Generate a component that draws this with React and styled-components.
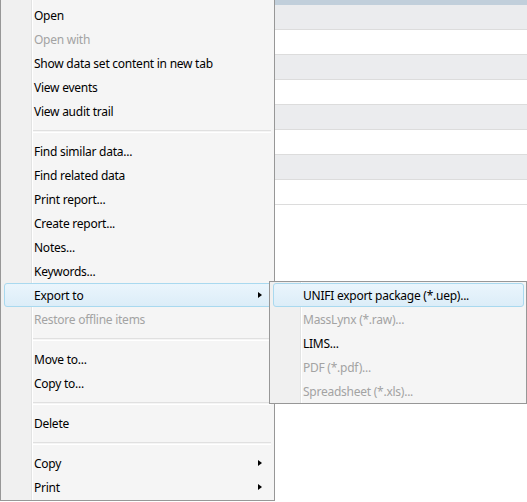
import React from "react";
import styled, { createGlobalStyle } from "styled-components";

const Global = createGlobalStyle`
  html, body { margin: 0; padding: 0; background: #fff; }
  body { width: 527px; height: 502px; overflow: hidden; position: relative; }
  #root { position: relative; width: 527px; height: 502px; }
`;

const Grid = styled.div`
  display: flex;
  flex-direction: column;
  width: 100%;
`;

const HeaderBar = styled.div`
  height: 5px;
  background: #c1cfdb;
`;

const Row = styled.div`
  height: 24px;
  background: ${(p) => (p.$alt ? "#ebecee" : "#ffffff")};
  border-bottom: 1px solid #dcdcdc;
`;

const Menu = styled.div`
  position: absolute;
  left: ${(p) => p.$left}px;
  top: ${(p) => p.$top}px;
  width: ${(p) => p.$width}px;
  box-sizing: border-box;
  display: flex;
  flex-direction: column;
  border: 1px solid #979797;
  background: linear-gradient(
    to right,
    #f0f0f0 0,
    #f0f0f0 ${(p) => p.$gutter}px,
    #e2e3e3 ${(p) => p.$gutter}px,
    #e2e3e3 ${(p) => p.$gutter + 1}px,
    #ffffff ${(p) => p.$gutter + 1}px,
    #ffffff ${(p) => p.$gutter + 2}px,
    #f5f5f5 ${(p) => p.$gutter + 2}px
  );
  padding: ${(p) => p.$padTop}px 0 ${(p) => p.$padBottom}px 0;
  font-family: "Noto Sans", "Open Sans", sans-serif;
  font-size: 12px;
  z-index: ${(p) => p.$z};
`;

const Item = styled.div`
  position: relative;
  height: 24px;
  box-sizing: border-box;
  margin: 0 2px 0 3px;
  padding-left: ${(p) => p.$indent}px;
  display: flex;
  align-items: center;
  color: ${(p) => (p.$disabled ? "#a3a3a3" : "#000000")};
  border: 1px solid ${(p) => (p.$active ? "#a9d9ef" : "transparent")};
  border-radius: 3px;
  background: ${(p) =>
    p.$active ? "linear-gradient(to bottom, #eaf5fc 0%, #dcedf8 100%)" : "transparent"};
  white-space: nowrap;
  letter-spacing: -0.25px;
`;

const Label = styled.span`
  flex: 1;
`;

const Arrow = styled.span`
  width: 0;
  height: 0;
  margin-right: 9px;
  border-top: 3.5px solid transparent;
  border-bottom: 3.5px solid transparent;
  border-left: 4px solid #000;
`;

const Separator = styled.div`
  height: 16px;
  display: flex;
  align-items: center;
  padding-left: ${(p) => p.$indent}px;
  padding-right: 3px;
  &::after {
    content: "";
    flex: 1;
    height: 1px;
    border-top: 1px solid #e0e0e0;
    border-bottom: 1px solid #ffffff;
  }
`;

const mainItems = [
  { t: "Open" },
  { t: "Open with", d: true },
  { t: "Show data set content in new tab" },
  { t: "View events" },
  { t: "View audit trail" },
  { sep: true },
  { t: "Find similar data..." },
  { t: "Find related data" },
  { t: "Print report..." },
  { t: "Create report..." },
  { t: "Notes..." },
  { t: "Keywords..." },
  { t: "Export to", sub: true, a: true },
  { t: "Restore offline items", d: true },
  { sep: true },
  { t: "Move to..." },
  { t: "Copy to..." },
  { sep: true },
  { t: "Delete" },
  { sep: true },
  { t: "Copy", sub: true },
  { t: "Print", sub: true },
];

const subItems = [
  { t: "UNIFI export package (*.uep)...", a: true },
  { t: "MassLynx (*.raw)...", d: true },
  { t: "LIMS..." },
  { t: "PDF (*.pdf)...", d: true },
  { t: "Spreadsheet (*.xls)...", d: true },
];

function MenuList({ items, indent, sepIndent }) {
  return items.map((it, i) =>
    it.sep ? (
      <Separator key={i} $indent={sepIndent} />
    ) : (
      <Item key={i} $indent={indent} $disabled={it.d} $active={it.a}>
        <Label>{it.t}</Label>
        {it.sub && <Arrow />}
      </Item>
    )
  );
}

export default function App() {
  const rows = [true, false, true, false, true, false, true, false];
  return (
    <>
      <Global />
      <Grid>
        <HeaderBar />
        {rows.map((alt, i) => (
          <Row key={i} $alt={alt} />
        ))}
      </Grid>
      <Menu $left={0} $top={-1} $width={275} $gutter={30} $padTop={3} $padBottom={1} $z={1}>
        <MenuList items={mainItems} indent={29} sepIndent={32} />
      </Menu>
      <Menu $left={269} $top={281} $width={258} $gutter={30} $padTop={1} $padBottom={0} $z={2}>
        <MenuList items={subItems} indent={29} sepIndent={32} />
      </Menu>
    </>
  );
}
